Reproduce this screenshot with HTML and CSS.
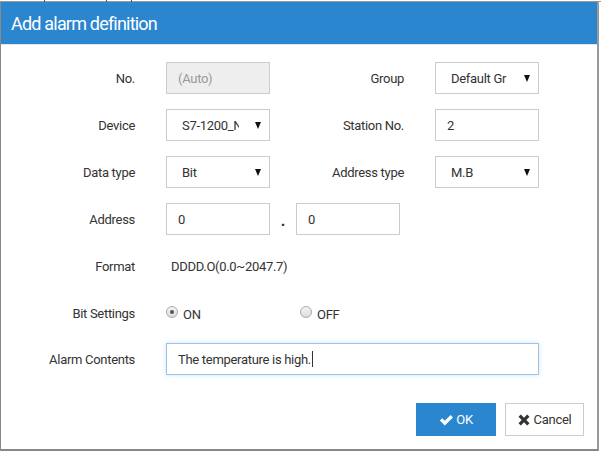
FILE: index.html
```html
<!DOCTYPE html>
<html>
<head>
<meta charset="utf-8">
<link rel="stylesheet" href="styles.css">
</head>
<body>
<div class="backdrop"><span class="mark m1"></span><span class="mark m2"></span><span class="mark m3"></span></div>
<div class="dialog">
  <div class="header">Add alarm definition</div>
  <div class="body">
    <div class="form">
      <div class="label">No.</div>
      <div class="ctrl"><div class="input disabled">(Auto)</div></div>
      <div class="label">Group</div>
      <div class="ctrl"><div class="input select"><span class="val">Default Gr</span><svg class="arrow" width="6" height="7" viewBox="0 0 6 7"><path d="M0 0 H6 L3 7 Z" fill="#111"/></svg></div></div>

      <div class="label">Device</div>
      <div class="ctrl"><div class="input select"><span class="val clip">S7-1200_N</span><svg class="arrow" width="6" height="7" viewBox="0 0 6 7"><path d="M0 0 H6 L3 7 Z" fill="#111"/></svg></div></div>
      <div class="label">Station No.</div>
      <div class="ctrl"><div class="input">2</div></div>

      <div class="label">Data type</div>
      <div class="ctrl"><div class="input select"><span class="val">Bit</span><svg class="arrow" width="6" height="7" viewBox="0 0 6 7"><path d="M0 0 H6 L3 7 Z" fill="#111"/></svg></div></div>
      <div class="label">Address type</div>
      <div class="ctrl"><div class="input select"><span class="val">M.B</span><svg class="arrow" width="6" height="7" viewBox="0 0 6 7"><path d="M0 0 H6 L3 7 Z" fill="#111"/></svg></div></div>

      <div class="label">Address</div>
      <div class="ctrl span3 addr">
        <div class="input">0</div>
        <span class="dot">.</span>
        <div class="input">0</div>
      </div>

      <div class="label">Format</div>
      <div class="ctrl span3 text">DDDD.O(0.0~2047.7)</div>

      <div class="label">Bit Settings</div>
      <div class="ctrl span3 radios">
        <label class="radio"><span class="rb on"></span>ON</label>
        <label class="radio"><span class="rb"></span>OFF</label>
      </div>

      <div class="label last">Alarm Contents</div>
      <div class="ctrl span3 last"><div class="input wide focus">The temperature is high.<span class="caret"></span></div></div>
    </div>
    <div class="footer">
      <button class="btn primary"><svg width="15" height="12" viewBox="0 0 15 12"><path d="M0.8 6.6 L3.2 4.2 L5.8 6.8 L11.6 1 L14 3.4 L5.8 11.6 Z" fill="#fff"/></svg>OK</button>
      <button class="btn"><svg width="12" height="12" viewBox="0 0 12 12"><path d="M0.5 2.8 L2.8 0.5 L6 3.7 L9.2 0.5 L11.5 2.8 L8.3 6 L11.5 9.2 L9.2 11.5 L6 8.3 L2.8 11.5 L0.5 9.2 L3.7 6 Z" fill="#333"/></svg>Cancel</button>
    </div>
  </div>
</div>
</body>
</html>
```
FILE: styles.css
```css
* { box-sizing: border-box; }
html, body { margin: 0; padding: 0; }
body {
  width: 601px;
  height: 452px;
  overflow: hidden;
  background: #fff;
  font-family: Roboto, "Liberation Sans", sans-serif;
  color: #333;
}
.backdrop {
  height: 2px;
  border-bottom: 1px solid #9a9a9a;
  position: relative;
}
.mark { position: absolute; top: 0; width: 1px; height: 2px; background: #555; }
.m1 { left: 44px; } .m2 { left: 106px; } .m3 { left: 131px; }
.dialog {
  width: 599px;
  height: 450px;
  border-left: 1px solid #888;
  border-right: 2px solid #999;
  border-bottom: 2px solid #888;
  margin-top: -1px;
  display: flex;
  flex-direction: column;
}
.header {
  height: 44px;
  background: #2a86cf;
  color: #fff;
  font-size: 18px;
  letter-spacing: -0.8px;
  padding: 3px 0 0 10px;
  line-height: 40px;
  border-bottom: 1px solid #e5e5e5;
}
.body {
  flex: 1;
  display: flex;
  flex-direction: column;
  padding: 17px 13px 13px 0;
  letter-spacing: -0.3px;
}
.form {
  display: grid;
  grid-template-columns: 134px 104px 103px 104px;
  column-gap: 31px;
  grid-auto-rows: 32px;
  row-gap: 15px;
}
.label {
  font-size: 13px;
  text-align: right;
  align-self: center;
  color: #333;
}
.last { margin-top: -2px; }
.ctrl { display: flex; align-items: center; }
.span3 { grid-column: 2 / span 3; }
.input {
  width: 104px;
  height: 32px;
  border: 1px solid #ccc;
  font-size: 13px;
  padding: 0 11px;
  display: flex;
  align-items: center;
  color: #333;
  background: #fff;
}
.disabled { background: #eee; color: #999; }
.select { justify-content: space-between; padding: 0 8px 0 15px; }
.select .val { overflow: hidden; white-space: nowrap; width: 63px; }
.select .val.clip { width: 57px; }
.addr .dot { width: 26px; text-align: center; font-size: 16px; font-weight: bold; padding-top: 3px; }
.text { font-size: 13px; padding-left: 5px; }
.radios { font-size: 13px; padding-top: 2px; }
.radio { display: flex; align-items: center; width: 134px; }
.rb {
  width: 12px; height: 12px; border-radius: 50%;
  border: 1px solid #aaa;
  background: linear-gradient(#f4f4f4, #dcdcdc);
  margin-right: 5px;
  margin-top: -4px;
  position: relative;
}
.rb.on::after {
  content: ""; position: absolute; left: 3px; top: 3px;
  width: 4px; height: 4px; border-radius: 50%; background: #555;
}
.wide { width: 373px; }
.focus { border-color: #9ec3e6; box-shadow: 0 0 4px rgba(102,175,233,.35); }
.caret { display: inline-block; width: 1px; height: 16px; background: #333; margin-left: 1px; }
.footer {
  margin-top: auto;
  display: flex;
  justify-content: flex-end;
  gap: 9px;
}
.btn {
  height: 33px;
  width: 79px;
  border: 1px solid #ccc;
  background: #fff;
  font-family: Roboto, "Liberation Sans", sans-serif;
  font-size: 13px;
  letter-spacing: -0.3px;
  color: #333;
  display: flex;
  align-items: center;
  justify-content: center;
  gap: 4px;
  padding: 0;
}
.btn.primary { width: 80px; background: #2a86cf; border-color: #2a86cf; color: #fff; gap: 2px; }
```
